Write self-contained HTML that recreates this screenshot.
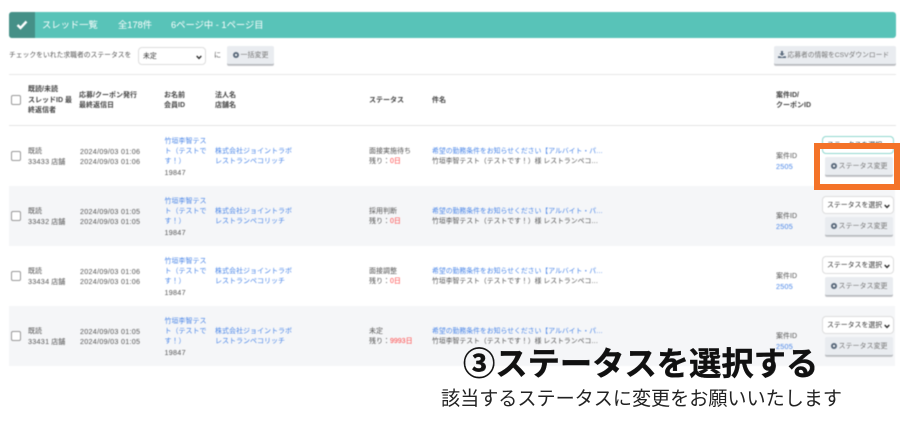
<!DOCTYPE html>
<html lang="ja"><head><meta charset="utf-8"><title>スレッド一覧</title>
<style>
html,body{margin:0;padding:0;background:#fff}
body{width:900px;height:435px;overflow:hidden;position:relative;font-family:"Liberation Sans","Noto Sans CJK JP",sans-serif;color:#555}
.b{position:absolute;left:0;top:0;width:900px;height:435px;filter:blur(.4px)}
.a,.l{position:absolute;white-space:nowrap;font-size:7px;line-height:10.2px}
.l{color:#4a86e8}
.h{font-weight:bold;color:#444}
.row{position:absolute;left:9px;width:886px;height:60px}
.row>*{position:absolute}
.g{background:#f5f6f8}
.cb{width:8px;height:8px;border:1px solid #999;border-radius:2px;background:#fff}
.btn{background:#e9ecf0;border-bottom:1px solid #b5b8bc;border-radius:2px;color:#777;box-sizing:border-box;height:19px;line-height:19.5px;font-size:7px;white-space:nowrap;text-align:center;box-shadow:0 1px 0 #c8cace}
.sel{background:#fff;border:1px solid #ddd;border-radius:4px;box-sizing:border-box;color:#333;font-size:6.9px;line-height:17.5px;white-space:nowrap;padding-left:4px}
.ic{display:inline-block;width:6px;height:6px;border-radius:50%;background:radial-gradient(circle,#fff 0,#fff .8px,#5a6a7c 1.3px);margin-right:2px;vertical-align:-1px}
.r{color:#f44}
.n{font-size:7.2px;letter-spacing:.27px}
.s{font-size:6.85px}
.t{color:#fff;font-size:9.3px;line-height:11px;top:20px}
svg.ch{position:absolute;right:3px;top:6.5px}
</style></head><body>
<div class="b">
<div style="position:absolute;left:9px;top:12px;width:887px;height:25.5px;background:#58c3b8;border-radius:3px"></div>
<div style="position:absolute;left:9px;top:12px;width:26px;height:25.5px;background:#459087;border-radius:3px 0 0 3px"></div>
<svg style="position:absolute;left:16px;top:20px" width="12" height="10" viewBox="0 0 12 10"><path d="M1.5 5l3 3 6-6.5" fill="none" stroke="#fff" stroke-width="2.4"/></svg>
<span class="a t" style="left:42px">スレッド一覧</span>
<span class="a t" style="left:118px">全178件</span>
<span class="a t" style="left:171px">6ページ中 - 1ページ目</span>

<span class="a" style="left:9px;top:51px;font-size:6.8px">チェックをいれた求職者のステータスを</span>
<div class="sel" style="position:absolute;left:138px;top:47px;width:68px;height:18px">未定<svg class="ch" width="6" height="5" viewBox="0 0 6 5"><path d="M.7 1l2.3 2.4L5.3 1" fill="none" stroke="#222" stroke-width="1.3"/></svg></div>
<span class="a" style="left:214px;top:51px;font-size:7px">に</span>
<div class="btn" style="position:absolute;left:227px;top:46px;width:47px"><span class="ic"></span>一括変更</div>
<div class="btn" style="position:absolute;left:774px;top:46px;width:122px;text-align:left;padding-left:4px;font-size:6.75px"><svg width="8" height="7" viewBox="0 0 8 7" style="margin-right:1.5px;vertical-align:-1px"><path d="M3 0h2v2.500h1.700L4 5 1.300 2.500H3zM0 5.200h2L4 6.300 6 5.200h2V7H0z" fill="#5a6a7c"/></svg>応募者の情報をCSVダウンロード</div>
<div style="position:absolute;left:9px;top:74px;width:887px;height:1px;background:#e8e8e8"></div>

<div class="cb" style="position:absolute;left:11px;top:95px"></div>
<span class="a h" style="left:28px;top:85px;line-height:10.7px">既読/未読<br>スレッドID 最<br>終返信者</span>
<span class="a h" style="left:79px;top:91px">応募/クーポン発行<br>最終返信日</span>
<span class="a h" style="left:164px;top:91px">お名前<br>会員ID</span>
<span class="a h" style="left:215px;top:91px">法人名<br>店舗名</span>
<span class="a h" style="left:369px;top:96px">ステータス</span>
<span class="a h" style="left:432px;top:96px">件名</span>
<span class="a h" style="left:776px;top:91px">案件ID/<br>クーポンID</span>
<div style="position:absolute;left:9px;top:125px;width:887px;height:1px;background:#e4e4e4"></div>

<!-- row 1 -->
<div class="row" style="top:126px">
<div class="cb" style="left:2px;top:25px"></div>
<span class="a" style="left:19px;top:21px">既読<br><span class="n">33433</span> 店舗</span>
<span class="a n" style="left:71px;top:21px">2024/09/03 01:06<br>2024/09/03 01:06</span>
<span class="l" style="left:155.500px;top:11px">竹垣李智テス<br>ト（テストで<br>す！）<br><span class="n" style="color:#555">19847</span></span>
<span class="l" style="left:206px;top:21px">株式会社ジョイントラボ<br>レストランペコリッチ</span>
<span class="a" style="left:360px;top:21px">面接実施待ち<br>残り：<span class="r">0日</span></span>
<span class="l s" style="left:423px;top:21px">希望の勤務条件をお知らせください【アルバイト・パ…<br><span style="color:#555">竹垣李智テスト（テストです！）様 レストランペコ…</span></span>
<span class="a" style="left:767px;top:26px">案件ID<br><span class="n" style="color:#4a86e8">2505</span></span>
</div>
<!-- row 2 -->
<div class="row g" style="top:186px">
<div class="cb" style="left:2px;top:25px"></div>
<span class="a" style="left:19px;top:21px">既読<br><span class="n">33432</span> 店舗</span>
<span class="a n" style="left:71px;top:21px">2024/09/03 01:05<br>2024/09/03 01:05</span>
<span class="l" style="left:155.500px;top:11px">竹垣李智テス<br>ト（テストで<br>す！）<br><span class="n" style="color:#555">19847</span></span>
<span class="l" style="left:206px;top:21px">株式会社ジョイントラボ<br>レストランペコリッチ</span>
<span class="a" style="left:360px;top:21px">採用判断<br>残り：<span class="r">0日</span></span>
<span class="l s" style="left:423px;top:21px">希望の勤務条件をお知らせください【アルバイト・パ…<br><span style="color:#555">竹垣李智テスト（テストです！）様 レストランペコ…</span></span>
<span class="a" style="left:767px;top:26px">案件ID<br><span class="n" style="color:#4a86e8">2505</span></span>
</div>
<!-- row 3 -->
<div class="row" style="top:246px">
<div class="cb" style="left:2px;top:25px"></div>
<span class="a" style="left:19px;top:21px">既読<br><span class="n">33434</span> 店舗</span>
<span class="a n" style="left:71px;top:21px">2024/09/03 01:06<br>2024/09/03 01:06</span>
<span class="l" style="left:155.500px;top:11px">竹垣李智テス<br>ト（テストで<br>す！）<br><span class="n" style="color:#555">19847</span></span>
<span class="l" style="left:206px;top:21px">株式会社ジョイントラボ<br>レストランペコリッチ</span>
<span class="a" style="left:360px;top:21px">面接調整<br>残り：<span class="r">0日</span></span>
<span class="l s" style="left:423px;top:21px">希望の勤務条件をお知らせください【アルバイト・パ…<br><span style="color:#555">竹垣李智テスト（テストです！）様 レストランペコ…</span></span>
<span class="a" style="left:767px;top:26px">案件ID<br><span class="n" style="color:#4a86e8">2505</span></span>
</div>
<!-- row 4 -->
<div class="row g" style="top:306px">
<div class="cb" style="left:2px;top:25px"></div>
<span class="a" style="left:19px;top:21px">既読<br><span class="n">33431</span> 店舗</span>
<span class="a n" style="left:71px;top:21px">2024/09/03 01:05<br>2024/09/03 01:05</span>
<span class="l" style="left:155.500px;top:11px">竹垣李智テス<br>ト（テストで<br>す！）<br><span class="n" style="color:#555">19847</span></span>
<span class="l" style="left:206px;top:21px">株式会社ジョイントラボ<br>レストランペコリッチ</span>
<span class="a" style="left:360px;top:21px">未定<br>残り：<span class="r">9993日</span></span>
<span class="l s" style="left:423px;top:21px">希望の勤務条件をお知らせください【アルバイト・パ…<br><span style="color:#555">竹垣李智テスト（テストです！）様 レストランペコ…</span></span>
<span class="a" style="left:767px;top:26px">案件ID<br><span class="n" style="color:#4a86e8">2505</span></span>
</div>

<!-- selects and buttons -->
<div class="sel" style="position:absolute;left:822px;top:136px;width:72px;height:18px;border-color:#8fd8cf">ステータスを選択</div>
<div class="btn" style="position:absolute;left:825px;top:157px;width:68px;height:19px"><span class="ic"></span>ステータス変更</div>
<div class="sel" style="position:absolute;left:822px;top:196px;width:72px;height:18px">ステータスを選択<svg class="ch" width="6" height="5" viewBox="0 0 6 5"><path d="M.7 1l2.300 2.400L5.300 1" fill="none" stroke="#222" stroke-width="1.3"/></svg></div>
<div class="btn" style="position:absolute;left:825px;top:217px;width:68px"><span class="ic"></span>ステータス変更</div>
<div class="sel" style="position:absolute;left:822px;top:256px;width:72px;height:18px">ステータスを選択<svg class="ch" width="6" height="5" viewBox="0 0 6 5"><path d="M.7 1l2.300 2.400L5.300 1" fill="none" stroke="#222" stroke-width="1.3"/></svg></div>
<div class="btn" style="position:absolute;left:825px;top:277px;width:68px"><span class="ic"></span>ステータス変更</div>
<div class="sel" style="position:absolute;left:822px;top:316px;width:72px;height:18px">ステータスを選択<svg class="ch" width="6" height="5" viewBox="0 0 6 5"><path d="M.7 1l2.300 2.400L5.300 1" fill="none" stroke="#222" stroke-width="1.3"/></svg></div>
<div class="btn" style="position:absolute;left:825px;top:337px;width:68px"><span class="ic"></span>ステータス変更</div>
</div>

<!-- orange highlight -->
<div style="position:absolute;left:814px;top:143px;width:86px;height:47px;box-sizing:border-box;border:6px solid #f47328"></div>

<!-- captions -->
<div style="position:absolute;left:463px;top:342px;font-size:32.300px;line-height:40px;font-weight:bold;color:#111;white-space:nowrap;font-family:'Noto Sans CJK JP',sans-serif;-webkit-text-stroke:.4px #111">③ステータスを選択する</div>
<div style="position:absolute;left:441px;top:384px;font-size:19.100px;line-height:27px;color:#222;white-space:nowrap;font-family:'Noto Sans CJK JP',sans-serif">該当するステータスに変更をお願いいたします</div>
</body></html>
